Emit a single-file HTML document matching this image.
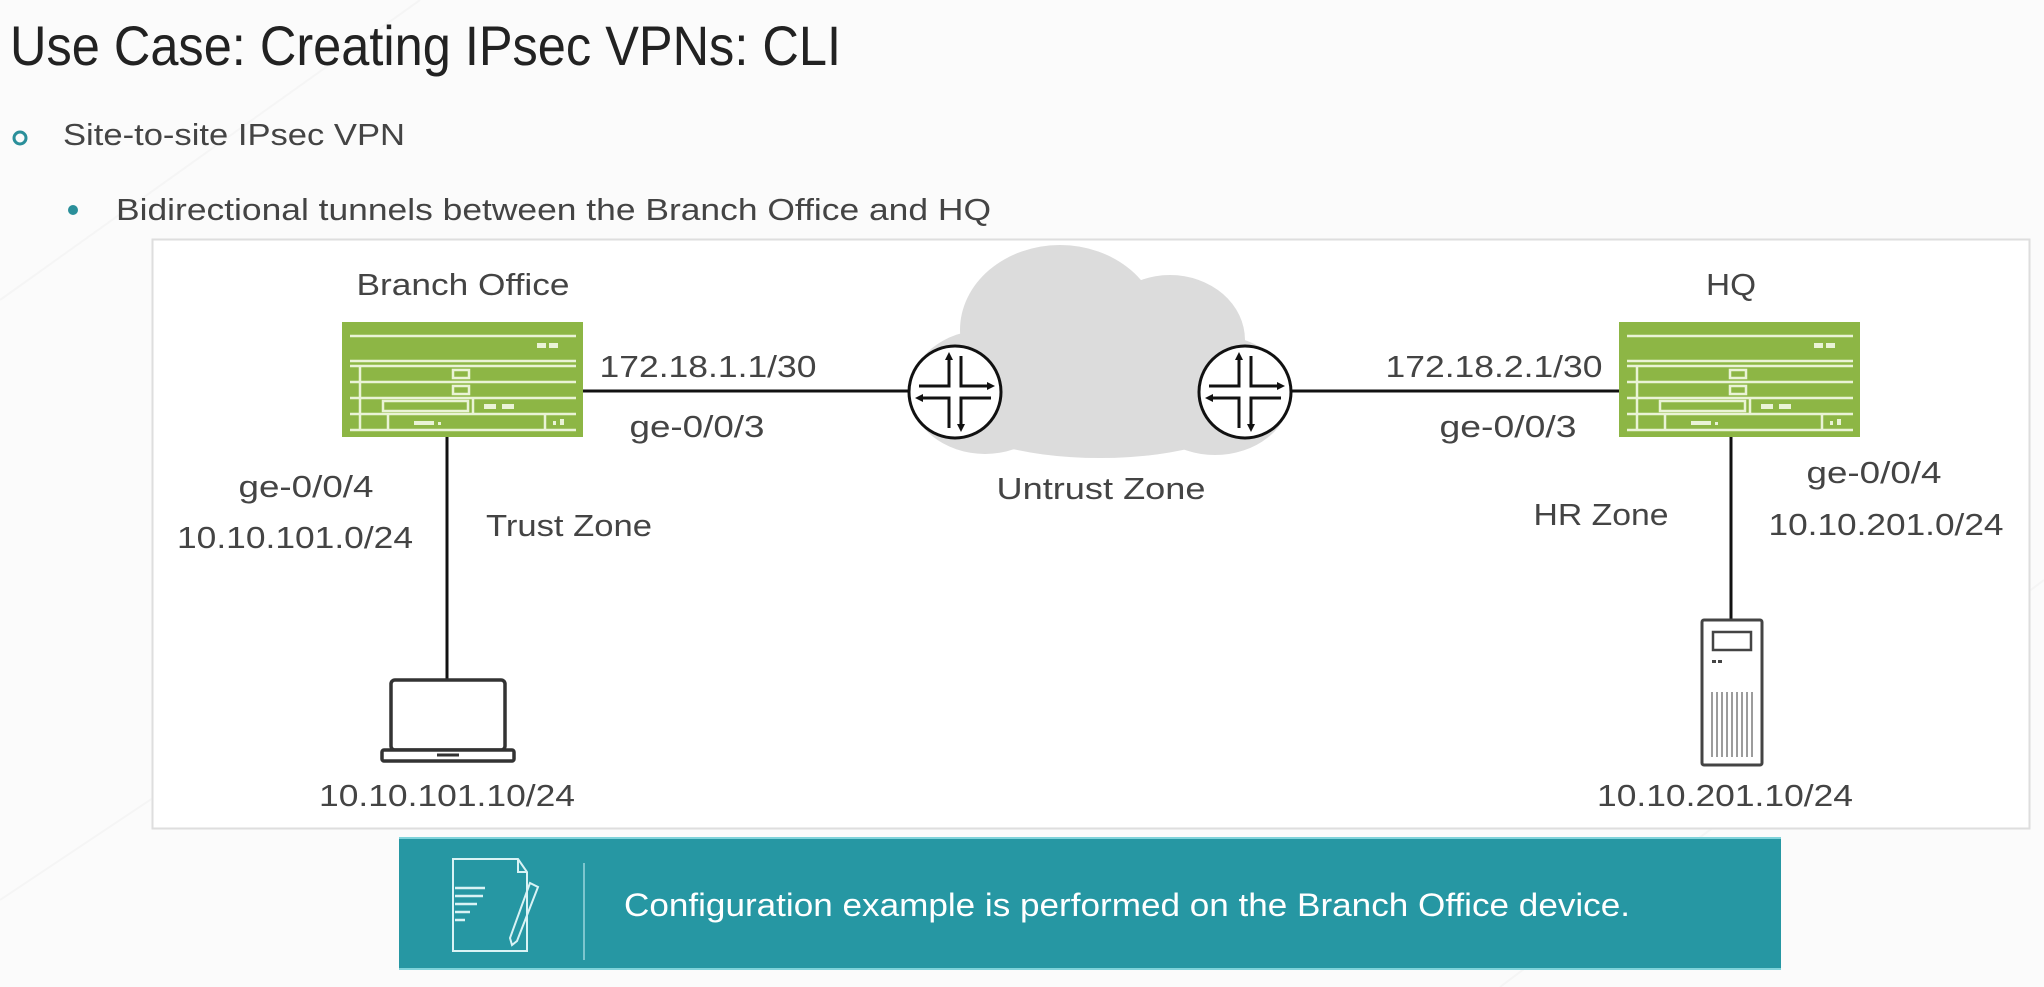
<!DOCTYPE html>
<html><head><meta charset="utf-8"><style>
html,body{margin:0;padding:0;background:#fbfbfb;}
svg{display:block}
text{font-family:"Liberation Sans",sans-serif;}
</style></head><body>
<svg width="2044" height="987" viewBox="0 0 2044 987" xmlns="http://www.w3.org/2000/svg">
<rect width="2044" height="987" fill="#fbfbfb"/>
<g stroke="#f5f5f5" stroke-width="2" fill="none">
<path d="M0 300 L420 0"/><path d="M1500 987 L2044 580"/><path d="M0 900 L300 700"/>
</g>
<text x="10" y="65" font-size="56" fill="#222" textLength="831" lengthAdjust="spacingAndGlyphs">Use Case: Creating IPsec VPNs: CLI</text>
<circle cx="20" cy="138" r="6" fill="none" stroke="#2a8f9a" stroke-width="3"/>
<text x="63" y="145" font-size="31" fill="#444" textLength="342" lengthAdjust="spacingAndGlyphs">Site-to-site IPsec VPN</text>
<circle cx="73" cy="210" r="5" fill="#2a8f9a"/>
<text x="116" y="220" font-size="31" fill="#444" textLength="875" lengthAdjust="spacingAndGlyphs">Bidirectional tunnels between the Branch Office and HQ</text>

<rect x="152.5" y="239.5" width="1877" height="589" fill="#fff" stroke="#dedede" stroke-width="2"/>

<!-- cloud -->
<g fill="#dcdcdc">
<ellipse cx="1060" cy="330" rx="100" ry="85"/>
<ellipse cx="1170" cy="340" rx="75" ry="65"/>
<ellipse cx="1215" cy="395" rx="75" ry="60"/>
<ellipse cx="985" cy="392" rx="75" ry="62"/>
<ellipse cx="1100" cy="410" rx="150" ry="48"/>
</g>

<!-- lines -->
<g stroke="#111" stroke-width="3">
<line x1="583" y1="391" x2="910" y2="391"/>
<line x1="1292" y1="391" x2="1619" y2="391"/>
<line x1="447" y1="437" x2="447" y2="679"/>
<line x1="1731" y1="437" x2="1731" y2="619"/>
</g>

<!-- routers -->
<g id="r1">
<circle cx="955" cy="392" r="46" fill="#fff" stroke="#111" stroke-width="3"/>
<g stroke="#111" stroke-width="3" fill="none">
<path d="M949 356 V386 H919"/><path d="M961 428 V398 H991"/>
<path d="M961 356 V386 H991"/><path d="M949 428 V398 H919"/>
</g>
<g fill="#111">
<path d="M949 352 l-4 8 h8z"/><path d="M995 386 l-8 -4 v8z"/><path d="M915 398 l8 -4 v8z"/><path d="M961 432 l-4 -8 h8z"/>
</g>
</g>
<use href="#r1" x="290"/>

<!-- devices -->
<g id="dev">
<rect x="342" y="322" width="241" height="115" fill="#8db645"/>
<g stroke="#eaf3d6" stroke-width="2.5" fill="none">
<line x1="350" y1="336" x2="576" y2="336"/>
<line x1="350" y1="361" x2="576" y2="361"/>
<line x1="350" y1="366" x2="576" y2="366"/>
<line x1="350" y1="382" x2="576" y2="382"/>
<line x1="350" y1="398" x2="576" y2="398"/>
<line x1="350" y1="414" x2="576" y2="414"/>
<line x1="350" y1="430" x2="576" y2="430"/>
<line x1="360" y1="366" x2="360" y2="430"/>
<line x1="388" y1="414" x2="388" y2="430"/>
<line x1="545" y1="414" x2="545" y2="430"/>
<line x1="473" y1="398" x2="473" y2="414"/>
<rect x="383" y="401" width="85" height="10"/>
<rect x="453" y="370" width="16" height="8"/>
<rect x="453" y="386" width="16" height="8"/>
</g>
<g fill="#eaf3d6">
<rect x="537" y="343" width="9" height="5"/><rect x="549" y="343" width="9" height="5"/>
<rect x="484" y="404" width="12" height="5"/><rect x="502" y="404" width="12" height="5"/>
<rect x="414" y="421" width="20" height="4"/><rect x="438" y="422" width="3" height="3"/>
<rect x="553" y="421" width="3" height="4"/><rect x="560" y="419" width="4" height="6"/>
</g>
</g>
<use href="#dev" x="1277"/>

<!-- laptop -->
<rect x="391" y="680" width="114" height="70" rx="4" fill="#fff" stroke="#333" stroke-width="3.5"/>
<rect x="382" y="750" width="132" height="11" rx="2" fill="#fff" stroke="#333" stroke-width="3.5"/>
<line x1="437" y1="755" x2="459" y2="755" stroke="#333" stroke-width="3"/>

<!-- server -->
<rect x="1702" y="620" width="60" height="145" rx="2" fill="#fff" stroke="#444" stroke-width="3"/>
<rect x="1713" y="632" width="38" height="18" fill="none" stroke="#444" stroke-width="2.5"/>
<rect x="1712" y="660" width="4" height="3" fill="#444"/><rect x="1718" y="660" width="4" height="3" fill="#444"/>
<g stroke="#666" stroke-width="1.3">
<line x1="1712" y1="692" x2="1712" y2="757"/><line x1="1717" y1="692" x2="1717" y2="757"/><line x1="1722" y1="692" x2="1722" y2="757"/><line x1="1727" y1="692" x2="1727" y2="757"/><line x1="1732" y1="692" x2="1732" y2="757"/><line x1="1737" y1="692" x2="1737" y2="757"/><line x1="1742" y1="692" x2="1742" y2="757"/><line x1="1747" y1="692" x2="1747" y2="757"/><line x1="1752" y1="692" x2="1752" y2="757"/>
</g>

<!-- labels -->
<g font-size="31" fill="#444" text-anchor="middle">
<text x="463" y="295" textLength="213" lengthAdjust="spacingAndGlyphs">Branch Office</text>
<text x="1731" y="295" textLength="50" lengthAdjust="spacingAndGlyphs">HQ</text>
<text x="708" y="377" textLength="217" lengthAdjust="spacingAndGlyphs">172.18.1.1/30</text>
<text x="697" y="437" textLength="135" lengthAdjust="spacingAndGlyphs">ge-0/0/3</text>
<text x="1494" y="377" textLength="217" lengthAdjust="spacingAndGlyphs">172.18.2.1/30</text>
<text x="1508" y="437" textLength="137" lengthAdjust="spacingAndGlyphs">ge-0/0/3</text>
<text x="1101" y="499" textLength="209" lengthAdjust="spacingAndGlyphs">Untrust Zone</text>
<text x="306" y="497" textLength="135" lengthAdjust="spacingAndGlyphs">ge-0/0/4</text>
<text x="295" y="548" textLength="236" lengthAdjust="spacingAndGlyphs">10.10.101.0/24</text>
<text x="569" y="536" textLength="166" lengthAdjust="spacingAndGlyphs">Trust Zone</text>
<text x="1874" y="483" textLength="135" lengthAdjust="spacingAndGlyphs">ge-0/0/4</text>
<text x="1886" y="535" textLength="235" lengthAdjust="spacingAndGlyphs">10.10.201.0/24</text>
<text x="1601" y="525" textLength="135" lengthAdjust="spacingAndGlyphs">HR Zone</text>
<text x="447" y="806" textLength="256" lengthAdjust="spacingAndGlyphs">10.10.101.10/24</text>
<text x="1725" y="806" textLength="256" lengthAdjust="spacingAndGlyphs">10.10.201.10/24</text>
</g>

<!-- banner -->
<rect x="399" y="837" width="1382" height="133" fill="#2697a3"/>
<line x1="399" y1="838" x2="1781" y2="838" stroke="#7fd3da" stroke-width="2"/>
<line x1="399" y1="969" x2="1781" y2="969" stroke="#7fd3da" stroke-width="2"/>
<g stroke="#d9f3f5" stroke-width="2" fill="none">
<path d="M453 859 H518 L527 872 V951 H453 Z"/>
<path d="M518 859 V872 H527"/>
</g>
<g stroke="#d9f3f5" stroke-width="2.5">
<line x1="455" y1="888" x2="485" y2="888"/><line x1="455" y1="896" x2="483" y2="896"/><line x1="455" y1="904" x2="477" y2="904"/><line x1="455" y1="912" x2="470" y2="912"/><line x1="455" y1="920" x2="465" y2="920"/>
</g>
<path d="M530 883 L538 887 L517 941 L512 945 L510 938 Z" fill="none" stroke="#d9f3f5" stroke-width="2"/>
<line x1="584" y1="863" x2="584" y2="960" stroke="#9ad6dc" stroke-width="1.5"/>
<text x="624" y="916" font-size="32" fill="#fff" textLength="1006" lengthAdjust="spacingAndGlyphs">Configuration example is performed on the Branch Office device.</text>
</svg>
</body></html>
